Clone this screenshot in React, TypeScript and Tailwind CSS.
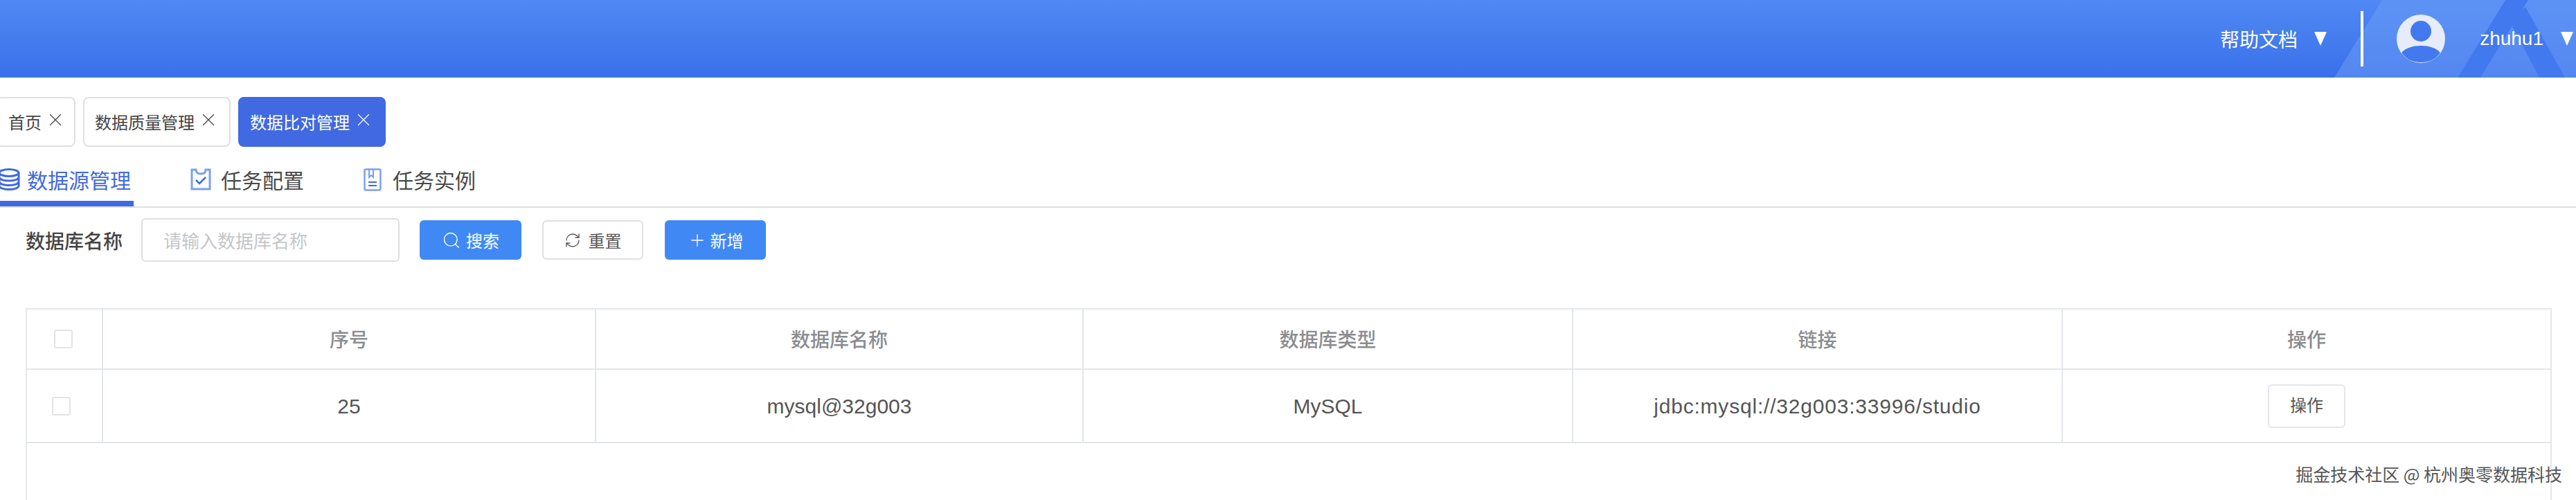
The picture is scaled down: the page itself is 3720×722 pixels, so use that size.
import { Plus, RefreshCw, Search, X } from 'lucide-react';

const pageTabs = [
  { label: '首页', width: 'w-[114px]', active: false },
  { label: '数据质量管理', width: 'w-[213px]', active: false },
  { label: '数据比对管理', width: 'w-[213px]', active: true },
];

const columns = ['序号', '数据库名称', '数据库类型', '链接', '操作'];

function DatabaseIcon() {
  return (
    <svg viewBox="0 0 32 32" className="h-[32px] w-[32px]" fill="none" stroke="#4169e1" strokeWidth="3">
      <ellipse cx="16" cy="6.5" rx="14" ry="5" />
      <path d="M2 6.5v19c0 2.8 6.3 5 14 5s14-2.2 14-5v-19" />
      <path d="M2 13c0 2.8 6.3 5 14 5s14-2.200 14-5" />
      <path d="M2 19.500c0 2.800 6.300 5 14 5s14-2.200 14-5" />
    </svg>
  );
}

function TaskConfigIcon() {
  return (
    <svg viewBox="0 0 30 32" className="h-[32px] w-[30px]" fill="none" stroke="#7ba0ef" strokeWidth="3">
      <path d="M8 2H2v28h26V2h-6c0 4-2.500 6-7 6s-7-2-7-6z" />
      <path d="M8 17l5 5 9-9" stroke="#4169e1" strokeWidth="2.500" />
    </svg>
  );
}

function TaskInstanceIcon() {
  return (
    <svg viewBox="0 0 26 33" className="h-[33px] w-[26px]" fill="none" stroke="#7ba0ef" strokeWidth="2.500">
      <rect x="1.500" y="1.500" width="23" height="30" rx="2" />
      <path d="M8 2v11l3-3 3 3V2" strokeWidth="2" />
      <path d="M7 20h12M7 25h12" stroke="#4169e1" strokeWidth="2" />
    </svg>
  );
}

function Caret() {
  return (
    <svg viewBox="0 0 18 20" className="h-[20px] w-[18px]" fill="#ffffff">
      <path d="M0 0h18L9 20z" />
    </svg>
  );
}

function Avatar() {
  return (
    <svg viewBox="0 0 70 70" className="h-[70px] w-[70px]">
      <circle cx="35" cy="35" r="35" fill="#e6ecf9" />
      <circle cx="35" cy="24" r="15" fill="#4279ef" />
      <path d="M7 55c6-7 17-10 28-10s22 3 28 10c-6 9-16 14-28 14S13 64 7 55z" fill="#4279ef" />
    </svg>
  );
}

function HeaderPattern() {
  return (
    <svg viewBox="0 0 400 112" className="absolute right-0 top-0 h-[112px] w-[400px]" preserveAspectRatio="none">
      <path d="M120 0h280v112H51z" fill="#6a9bf6" fillOpacity="0.55" />
      <path d="M298 0h33L262 112h-33z" fill="#4279ef" />
      <path d="M327 10l-22 22 42 80h37z" fill="#4279ef" />
    </svg>
  );
}

function Checkbox({ className }: { className: string }) {
  return <div className={`h-[27px] w-[27px] rounded-[3px] border-2 border-[#e2e4e8] bg-white ${className}`} />;
}

export default function App() {
  return (
    <div className="relative flex h-[722px] w-[3720px] flex-col overflow-hidden bg-white font-['Noto_Sans_CJK_SC','Noto_Sans',sans-serif]">
      {/* Top bar */}
      <header className="relative flex h-[112px] shrink-0 items-center justify-end bg-gradient-to-b from-[#5089f4] to-[#3a70ea] text-[28px] text-white">
        <HeaderPattern />
        <div className="relative flex items-center">
          <span>帮助文档</span>
          <span className="ml-[24px]"><Caret /></span>
          <div className="ml-[49px] h-[80px] w-[4px] bg-white" />
          <div className="ml-[48px]"><Avatar /></div>
          <span className="ml-[50px] font-['Liberation_Sans',sans-serif]">zhuhu1</span>
          <span className="ml-[25px] mr-[4px]"><Caret /></span>
        </div>
      </header>

      {/* Opened pages */}
      <div className="mt-[28px] flex h-[72px] shrink-0 -ml-[5px] gap-[11px]">
        {pageTabs.map((tab) => (
          <div
            key={tab.label}
            className={`flex items-center rounded-[8px] border-2 pl-[15px] text-[24px] ${tab.width} ${
              tab.active ? 'border-[#4169e1] bg-[#4169e1] text-white' : 'border-[#e0e0e0] bg-white text-[#444444]'
            }`}
          >
            <span>{tab.label}</span>
            <X className="ml-[5px] -mt-[6px] h-[30px] w-[30px]" strokeWidth={1} />
          </div>
        ))}
      </div>

      {/* Sub navigation */}
      <nav className="flex h-[88px] shrink-0 border-b-2 border-[#e0e0e0] text-[30px] text-[#4a4a4a]">
        <div className="-ml-[3px] flex h-[86px] w-[196px] items-start gap-[10px] border-b-8 border-[#4169e1] pt-[31px] text-[#4169e1]">
          <DatabaseIcon />
          <span className="leading-[32px]">数据源管理</span>
        </div>
        <div className="ml-[82px] flex items-start gap-[14px] pt-[31px]">
          <TaskConfigIcon />
          <span className="leading-[32px]">任务配置</span>
        </div>
        <div className="ml-[86px] flex items-start gap-[16px] pt-[31px]">
          <TaskInstanceIcon />
          <span className="leading-[32px]">任务实例</span>
        </div>
      </nav>

      {/* Search form */}
      <div className="mt-[15px] flex h-[63px] shrink-0 items-center pl-[37px]">
        <span className="w-[167px] text-[28px] font-medium text-[#444444]">数据库名称</span>
        <div className="flex h-[63px] w-[373px] items-center rounded-[6px] border-2 border-[#e0e0e0] pl-[30px] text-[26px] text-[#c4c6ca]">
          请输入数据库名称
        </div>
        <button className="ml-[29px] flex h-[57px] w-[147px] items-center justify-center gap-[7px] rounded-[6px] bg-[#4089f5] text-[24px] text-white">
          <Search className="h-[28px] w-[28px]" strokeWidth={1.2} />
          搜索
        </button>
        <button className="ml-[30px] flex h-[57px] w-[146px] items-center justify-center gap-[11px] rounded-[6px] border-2 border-[#e0e0e0] text-[24px] text-[#555555]">
          <RefreshCw className="h-[24px] w-[24px]" strokeWidth={1.3} />
          重置
        </button>
        <button className="ml-[31px] flex h-[57px] w-[146px] items-center justify-center gap-[5px] rounded-[6px] bg-[#4089f5] text-[24px] text-white">
          <Plus className="h-[28px] w-[28px]" strokeWidth={1.2} />
          新增
        </button>
      </div>

      {/* Table */}
      <div className="ml-[37px] mt-[67px] w-[3648px] grow border-x-2 border-t-2 border-[#e3e6ea]">
        <div className="grid h-[87px] grid-cols-[110px_712px_704px_707px_707px_1fr] border-b-2 border-[#e3e6ea] text-[28px] font-medium text-[#8a8c90]">
          <div className="flex items-center border-r-2 border-[#e3e6ea]">
            <Checkbox className="ml-[39px]" />
          </div>
          {columns.map((title, i) => (
            <div key={title} className={`flex items-center justify-center pb-[2px] ${i < 4 ? 'border-r-2 border-[#e3e6ea]' : ''}`}>
              {title}
            </div>
          ))}
        </div>
        <div className="grid h-[106px] grid-cols-[110px_712px_704px_707px_707px_1fr] border-b-2 border-[#e3e6ea] font-['Liberation_Sans','Noto_Sans_CJK_SC',sans-serif] text-[30px] text-[#555555]">
          <div className="flex items-center border-r-2 border-[#e3e6ea]">
            <Checkbox className="ml-[36px]" />
          </div>
          <div className="flex items-center justify-center border-r-2 border-[#e3e6ea]">25</div>
          <div className="flex items-center justify-center border-r-2 border-[#e3e6ea]">mysql@32g003</div>
          <div className="flex items-center justify-center border-r-2 border-[#e3e6ea]">MySQL</div>
          <div className="flex items-center justify-center border-r-2 border-[#e3e6ea] tracking-[0.8px]">
            jdbc:mysql://32g003:33996/studio
          </div>
          <div className="flex items-center justify-center">
            <button className="h-[63px] w-[112px] rounded-[6px] border-2 border-[#e3e6ea] text-[24px]">操作</button>
          </div>
        </div>
      </div>

      {/* Watermark */}
      <div className="absolute right-[20px] top-[666px] text-[25px] text-[#555555] [text-shadow:1px_1px_0_#ffffff]">
        掘金技术社区 @ 杭州奥零数据科技
      </div>
    </div>
  );
}
